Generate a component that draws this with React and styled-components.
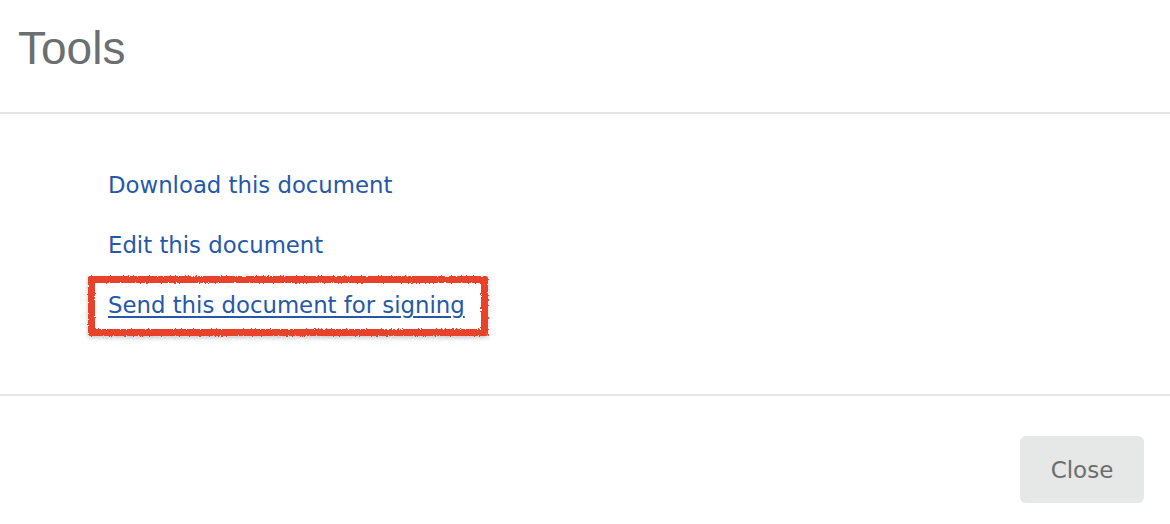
import React from "react";
import styled, { createGlobalStyle } from "styled-components";

const Global = createGlobalStyle`
  html, body { margin: 0; padding: 0; background: #fff; }
  body { font-family: "DejaVu Sans", sans-serif; }
`;

const Modal = styled.div`
  width: 1170px;
  height: 524px;
  background: #fff;
  display: flex;
  flex-direction: column;
`;

const Header = styled.div`
  height: 114px;
  box-sizing: border-box;
  border-bottom: 2px solid #e5e5e5;
  padding: 20px 0 0 18px;
`;

const Title = styled.h1`
  margin: 0;
  font-family: "Liberation Sans", Arial, sans-serif;
  font-weight: 400;
  font-size: 46px;
  line-height: 56px;
  color: #6b6f6f;
`;

const Body = styled.div`
  height: 282px;
  box-sizing: border-box;
  border-bottom: 2px solid #e5e5e5;
  padding: 55px 0 0 108px;
  display: flex;
  flex-direction: column;
  align-items: flex-start;
  gap: 25px;
`;

const LinkWrap = styled.div`
  position: relative;
  line-height: 32px;
`;

const Link = styled.a`
  font-size: 22.8px;
  color: #2559a8;
  text-decoration: ${(p) => (p.$underline ? "underline" : "none")};
  text-underline-offset: 3px;
  text-decoration-thickness: 2px;
  cursor: pointer;
`;

const Highlight = styled.span`
  position: absolute;
  left: -20px;
  right: -23px;
  top: -13px;
  bottom: -12px;
  border: 7px solid #e8432a;
  border-radius: 2px;
  box-shadow: 0 2px 4px rgba(0, 0, 0, 0.22);
  filter: url(#rough);
  pointer-events: none;
`;

const Defs = styled.svg`
  position: absolute;
  width: 0;
  height: 0;
`;

const Footer = styled.div`
  flex: 1;
  display: flex;
  justify-content: flex-end;
  align-items: flex-start;
  padding: 40px 26px 0 0;
`;

const Button = styled.button`
  width: 124px;
  height: 67px;
  border: none;
  border-radius: 6px;
  background: #e6e7e7;
  color: #6b6e6e;
  font-family: "DejaVu Sans", sans-serif;
  font-size: 23px;
  cursor: pointer;
`;

export default function App() {
  return (
    <Modal>
      <Global />
      <Defs aria-hidden="true">
        <filter id="rough">
          <feTurbulence type="fractalNoise" baseFrequency="0.6" numOctaves="2" seed="3" result="n" />
          <feDisplacementMap in="SourceGraphic" in2="n" scale="3" />
        </filter>
      </Defs>
      <Header>
        <Title>Tools</Title>
      </Header>
      <Body>
        <LinkWrap>
          <Link>Download this document</Link>
        </LinkWrap>
        <LinkWrap>
          <Link>Edit this document</Link>
        </LinkWrap>
        <LinkWrap>
          <Link $underline>Send this document for signing</Link>
          <Highlight />
        </LinkWrap>
      </Body>
      <Footer>
        <Button>Close</Button>
      </Footer>
    </Modal>
  );
}
